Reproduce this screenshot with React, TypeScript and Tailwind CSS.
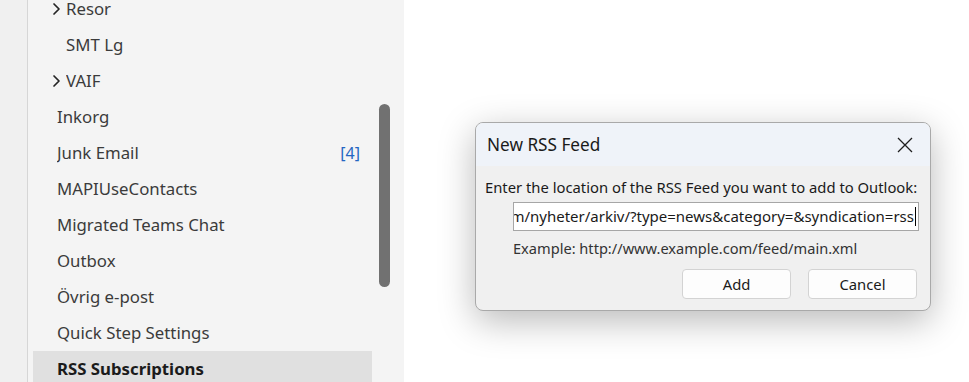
type Folder = {
  name: string;
  indent?: boolean;
  chevron?: boolean;
  count?: number;
  selected?: boolean;
};

const folders: Folder[] = [
  { name: "Resor", indent: true, chevron: true },
  { name: "SMT Lg", indent: true },
  { name: "VAIF", indent: true, chevron: true },
  { name: "Inkorg" },
  { name: "Junk Email", count: 4 },
  { name: "MAPIUseContacts" },
  { name: "Migrated Teams Chat" },
  { name: "Outbox" },
  { name: "Övrig e-post" },
  { name: "Quick Step Settings" },
  { name: "RSS Subscriptions", selected: true },
];

const feedUrl =
  "https://www.smt.com/nyheter/arkiv/?type=news&category=&syndication=rss";

function Chevron() {
  return (
    <svg width="9" height="14" viewBox="0 0 9 14" aria-hidden="true">
      <polyline points="2,2 7,7 2,12" fill="none" stroke="#242424" strokeWidth="1.7" strokeLinecap="round" strokeLinejoin="round" />
    </svg>
  );
}

function FolderRow({ folder }: { folder: Folder }) {
  return (
    <div
      className={`flex h-[36px] items-center pr-[12px] text-[16.8px] ${
        folder.selected ? "bg-[#e0e0e0] font-bold text-[#1b1b1b]" : "text-[#3b3b3b]"
      } ${folder.indent ? "pl-[19px]" : "pl-[24px]"}`}
    >
      {folder.indent ? (
        <span className="flex w-[14px] items-center">{folder.chevron ? <Chevron /> : null}</span>
      ) : null}
      <span className="flex-1 truncate">{folder.name}</span>
      {folder.count !== undefined ? (
        <span className="text-[16px] text-[#2466c2]">[{folder.count}]</span>
      ) : null}
    </div>
  );
}

function RssDialog() {
  return (
    <div className="absolute left-[475px] top-[122px] flex h-[189px] w-[456px] flex-col overflow-hidden rounded-[8px] border border-[#a9a9a9] bg-[#f0f0f0] shadow-[0_10px_36px_rgba(0,0,0,0.28)]">
      <header className="flex h-[43px] items-center justify-between bg-[#eff3f9] pl-[11px] pr-[17px]">
        <h2 className="text-[17.2px] text-[#1a1a1a]">New RSS Feed</h2>
        <svg width="16" height="16" viewBox="0 0 16 16" aria-hidden="true">
          <path d="M1 1 L15 15 M15 1 L1 15" stroke="#1f1f1f" strokeWidth="1.3" fill="none" />
        </svg>
      </header>
      <div className="flex flex-1 flex-col px-[9px] pt-[11px] text-[14.8px] text-[#1a1a1a]">
        <p className="leading-[20px]">Enter the location of the RSS Feed you want to add to Outlook:</p>
        <div className="ml-[28px] mt-[5px] flex h-[29px] w-[406px] items-center justify-end overflow-hidden border border-[#a6a6a6] bg-white pr-[2px]">
          <span className="whitespace-nowrap text-[15px]">{feedUrl}</span>
          <span className="ml-[1px] h-[19px] w-px shrink-0 bg-black" />
        </div>
        <p className="ml-[28px] mt-[7px] text-[14.6px] leading-[20px] text-[#333]">
          Example: http://www.example.com/feed/main.xml
        </p>
        <div className="mt-[11px] flex justify-end gap-[17px] pr-[4px]">
          <button
            type="button"
            className="h-[30px] w-[109px] rounded-[4px] border border-[#d3d3d3] bg-[#fdfdfd] text-[14.8px]"
          >
            Add
          </button>
          <button
            type="button"
            className="h-[30px] w-[109px] rounded-[4px] border border-[#d3d3d3] bg-[#fdfdfd] text-[14.8px]"
          >
            Cancel
          </button>
        </div>
      </div>
    </div>
  );
}

export default function App() {
  return (
    <main
      className="relative flex h-[382px] w-[969px] overflow-hidden bg-white"
      style={{ fontFamily: '"Noto Sans", "Open Sans", sans-serif' }}
    >
      <div className="w-[28px] shrink-0 border-r border-[#d6d6d6] bg-[#f0f0f0]" />
      <aside className="flex w-[376px] shrink-0 bg-[#f4f4f4] pl-[5px]">
        <nav className="-mt-[9px] w-[339px] shrink-0">
          {folders.map((folder) => (
            <FolderRow key={folder.name} folder={folder} />
          ))}
        </nav>
        <div className="ml-[7px] mt-[104px] h-[183px] w-[11px] rounded-full bg-[#717171]" />
      </aside>
      <section className="flex-1 bg-white" />
      <RssDialog />
    </main>
  );
}
